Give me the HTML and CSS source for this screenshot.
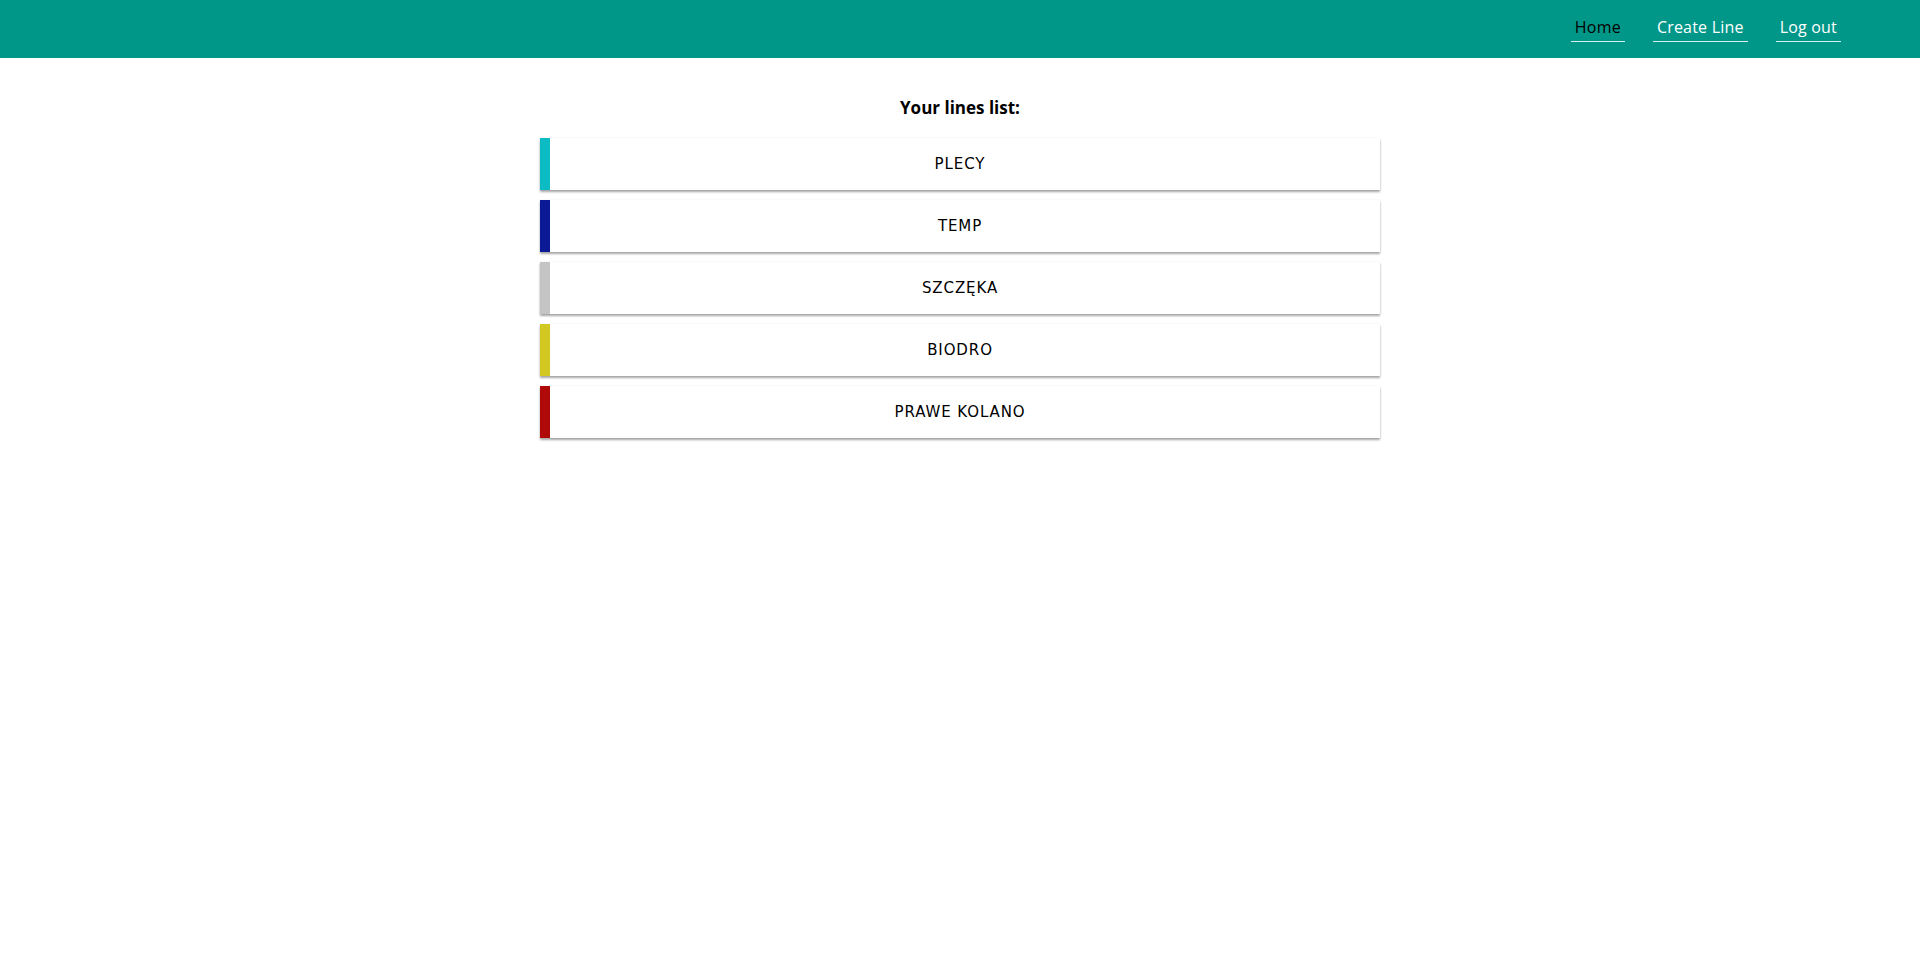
FILE: index.html
```html
<!DOCTYPE html>
<html>
<head>
<meta charset="utf-8">
<title>Lines</title>
<link rel="stylesheet" href="styles.css">
</head>
<body>
<header class="topbar">
  <nav class="nav">
    <a class="nav-link active" href="#">Home</a>
    <a class="nav-link" href="#">Create Line</a>
    <a class="nav-link" href="#">Log out</a>
  </nav>
</header>
<main class="content">
  <h2 class="title">Your lines list:</h2>
  <ul class="lines">
    <li class="line line-cyan">PLECY</li>
    <li class="line line-navy">TEMP</li>
    <li class="line line-grey">SZCZĘKA</li>
    <li class="line line-yellow">BIODRO</li>
    <li class="line line-red">PRAWE KOLANO</li>
  </ul>
</main>
</body>
</html>
```

FILE: styles.css
```css
html, body {
  margin: 0;
  padding: 0;
  background: #ffffff;
  font-family: "Open Sans", "Noto Sans", sans-serif;
}

body {
  min-height: 975px;
}

.topbar {
  height: 58px;
  background: #009688;
  display: flex;
  justify-content: flex-end;
  align-items: flex-start;
}

.nav {
  display: flex;
  gap: 28px;
  margin-right: 79px;
  padding-top: 16px;
}

.nav-link {
  display: block;
  color: #ffffff;
  text-decoration: none;
  font-size: 16px;
  line-height: 22px;
  padding: 0 4px 3px;
  letter-spacing: 0.2px;
  border-bottom: 1px solid rgba(255, 255, 255, 0.85);
}

.nav-link.active {
  color: #000000;
}

.content {
  width: 840px;
  margin: 0 auto;
  padding-bottom: 40px;
}

.title {
  margin: 38px 0 19px;
  text-align: center;
  font-size: 17px;
  line-height: 23px;
  font-weight: 700;
  color: #000;
}

.lines {
  list-style: none;
  margin: 0;
  padding: 0;
  display: flex;
  flex-direction: column;
  gap: 10px;
}

.line {
  height: 52px;
  display: flex;
  align-items: center;
  justify-content: center;
  border-left: 10px solid #ccc;
  padding-right: 10px;
  background: #fff;
  box-shadow: 0 2px 2px rgba(0, 0, 0, 0.34), 0 0 2px rgba(0, 0, 0, 0.07);
  font-family: "DejaVu Sans", "Open Sans", sans-serif;
  font-size: 15px;
  color: #000;
  letter-spacing: 0.9px;
}

.line-cyan { border-left-color: #0bbcc4; }
.line-navy { border-left-color: #0b1994; }
.line-grey { border-left-color: #c4c4c4; }
.line-yellow { border-left-color: #d3c821; }
.line-red { border-left-color: #b00909; }
```
